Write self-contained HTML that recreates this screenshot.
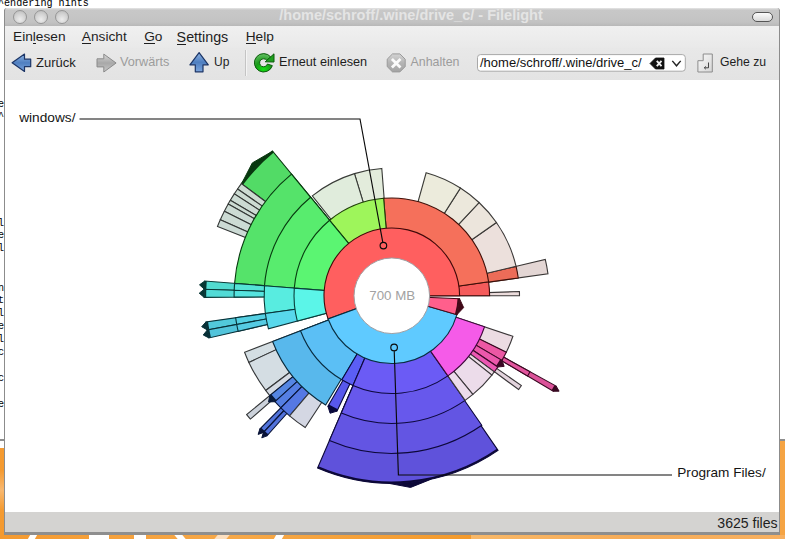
<!DOCTYPE html>
<html><head><meta charset="utf-8">
<style>
*{margin:0;padding:0;box-sizing:border-box}
html,body{width:785px;height:539px;overflow:hidden;background:#fff}
body{position:relative;font-family:"Liberation Sans",sans-serif;color:#1c1c1c}
.a{position:absolute;white-space:nowrap;line-height:1}
.mono{font-family:"Liberation Mono",monospace;font-size:10px;color:#000}
#desk{position:absolute;left:0;top:441px;width:785px;height:98px;background:linear-gradient(90deg,#f49a30 0%,#f6a848 30%,#f39a2c 60%,#f5a444 100%)}
#deskline{position:absolute;left:0;top:439px;width:785px;height:2px;background:#8e8e8e}
.box{position:absolute}
.wb{position:absolute;top:10px;width:14px;height:14px;border-radius:50%;background:radial-gradient(circle at 50% 70%,#ececec 0%,#d4d4d4 50%,#b8b8b8 100%);border:1px solid #969696}
.m{font-size:13.7px;color:#1e1e1e}
.m u{text-decoration:none;position:relative}
.m u:after{content:"";position:absolute;left:0;right:0;bottom:0px;height:1px;background:#1e1e1e}
.tb{font-size:12.7px;color:#1e1e1e}
.lbl{font-size:13.5px;color:#141414}
</style></head><body>
<div id="desk"></div>
<div class="box" style="left:0;top:441px;width:4px;height:7px;background:#fff"></div>
<div id="deskline"></div>
<div class="box" style="left:0;top:470px;width:4px;height:40px;background:linear-gradient(#f49a30,#f8b870 50%,#f49a30)"></div>
<div class="box" style="left:29px;top:535px;width:7px;height:4px;background:#fff;transform:skewX(-30deg)"></div>
<div class="box" style="left:89px;top:535px;width:20px;height:4px;background:#fff"></div>
<div class="box" style="left:134px;top:535px;width:12px;height:4px;background:#fff"></div>
<div class="box" style="left:176px;top:535px;width:8px;height:4px;background:#fff;transform:skewX(40deg)"></div>
<div class="box" style="left:216px;top:535px;width:12px;height:4px;background:#fde0c0;transform:skewX(-40deg)"></div>
<div class="box" style="left:275px;top:535px;width:8px;height:4px;background:#fff;transform:skewX(-30deg)"></div>
<div class="box" style="left:471px;top:535px;width:314px;height:4px;background:linear-gradient(90deg,#f8b868,#f6ac58 50%,#f7b060)"></div>
<div class="a mono" style="left:-2px;top:-1.5px;font-size:10.1px">^endering hints</div>
<div class="a mono" style="left:-2px;top:98.5px;line-height:12.9px;font-size:10.1px">e<br>^</div>
<div class="a mono" style="left:-2px;top:217.5px;line-height:12.9px;font-size:10.1px">l<br>e<br>l</div>
<div class="a mono" style="left:-2px;top:282.5px;line-height:12.9px;font-size:10.1px">n<br>t<br>l<br>e<br>l<br>c<br><br>c<br><br>e</div>

<!-- window frame -->
<div class="box" style="left:4px;top:10px;width:776px;height:525px;background:#8c8c8c"></div>
<div class="box" style="left:4px;top:8px;width:776px;height:18px;background:linear-gradient(#e6e6e6 0px,#c8c8c8 2px,#c3c3c3 14px,#b8b8b8 100%);border-radius:3px 3px 0 0;border-left:1px solid #8c8c8c;border-right:1px solid #8c8c8c"></div>
<div class="wb" style="left:13px"></div>
<div class="wb" style="left:34px"></div>
<div class="wb" style="left:55px"></div>
<div class="box" style="left:752px;top:12px;width:20.5px;height:10px;border-radius:5px;border:1px solid #555;background:linear-gradient(#fbfbfb,#dadada)"></div>
<div class="a" style="left:0;width:785px;text-align:center;top:8.4px;font-size:14.5px;font-weight:bold;color:#e4e4e4;padding-left:37px">/home/schroff/.wine/drive_c/ - Filelight</div>
<div class="box" style="left:5px;top:26px;width:774px;height:22px;background:linear-gradient(#f0f0f0,#e9e9e9)"></div>
<div class="box" style="left:5px;top:48px;width:774px;height:32px;background:linear-gradient(#e8e8e8,#e3e3e3)"></div>
<div class="box" style="left:5px;top:80px;width:774px;height:432px;background:#fff"></div>
<div class="box" style="left:5px;top:512px;width:774px;height:20px;background:#d4d3d1"></div>
<div class="box" style="left:5px;top:532px;width:774px;height:3px;background:#8e8e8e"></div>

<div class="a m" style="left:13px;top:30px">Ein<u>l</u>esen</div>
<div class="a m" style="left:81.8px;top:30px"><u>A</u>nsicht</div>
<div class="a m" style="left:144.2px;top:30px"><u>G</u>o</div>
<div class="a m" style="left:176.6px;top:29.5px;font-size:14.3px"><u>S</u>ettings</div>
<div class="a m" style="left:245.7px;top:30px"><u>H</u>elp</div>

<svg width="785" height="90" viewBox="0 0 785 90" style="position:absolute;left:0;top:0">
<defs>
<linearGradient id="gblue" x1="0" y1="0" x2="0" y2="1"><stop offset="0" stop-color="#8fb4e4"/><stop offset="0.5" stop-color="#4f7fc0"/><stop offset="1" stop-color="#7aa4dc"/></linearGradient>
<linearGradient id="ggray" x1="0" y1="0" x2="0" y2="1"><stop offset="0" stop-color="#d8d8d8"/><stop offset="0.5" stop-color="#a8a8a8"/><stop offset="1" stop-color="#c8c8c8"/></linearGradient>
<linearGradient id="gstop" x1="0" y1="0" x2="0" y2="1"><stop offset="0" stop-color="#d4d4d4"/><stop offset="0.5" stop-color="#b4b4b4"/><stop offset="1" stop-color="#a4a4a4"/></linearGradient>
<linearGradient id="gkey" x1="0" y1="0" x2="1" y2="1"><stop offset="0" stop-color="#fafafa"/><stop offset="1" stop-color="#d6d6d6"/></linearGradient>
</defs>
<path d="M12.1 62.8 L24.5 54.1 L24.5 59.2 L30.7 59.2 L30.7 66.7 L24.5 66.7 L24.5 71.5 Z" fill="url(#gblue)" stroke="#1c3566" stroke-width="1.2" stroke-linejoin="round"/>
<path d="M116.1 63 L103.8 54.1 L103.8 58.8 L97 58.8 L97 66.9 L103.8 66.9 L103.8 72 Z" fill="url(#ggray)" stroke="#8a8a8a" stroke-width="1" stroke-linejoin="round"/>
<path d="M199.1 52.6 L208.3 64.8 L203 64.8 L203 71.8 L195.3 71.8 L195.3 64.8 L189.9 64.8 Z" fill="url(#gblue)" stroke="#1c3566" stroke-width="1.2" stroke-linejoin="round"/>
<line x1="245.5" y1="50" x2="245.5" y2="76" stroke="#c4c4c4" stroke-width="1"/>
<line x1="246.5" y1="50" x2="246.5" y2="76" stroke="#f4f4f4" stroke-width="1"/>
<!-- reload -->
<defs><radialGradient id="ggreen" cx="0.5" cy="0.85" r="0.8"><stop offset="0" stop-color="#12e012"/><stop offset="0.55" stop-color="#1a9a1a"/><stop offset="1" stop-color="#5cbc5c"/></radialGradient></defs>
<path d="M270.85 57.14 A9.2 9.2 0 1 0 272.35 65.64 L267.40 64.04 A4 4 0 1 1 266.75 60.34 Z" fill="url(#ggreen)" stroke="#0c5c0c" stroke-width="1"/>
<path d="M265.2 61.8 L274 53.8 L274 62 Z" fill="#1ea01e" stroke="#0c5c0c" stroke-width="1" stroke-linejoin="round"/>
<!-- stop -->
<path d="M392.5 53.9 L399.9 53.9 L405.2 59.2 L405.2 66.6 L399.9 71.9 L392.5 71.9 L387.2 66.6 L387.2 59.2 Z" fill="url(#gstop)" stroke="#9a9a9a" stroke-width="1"/>
<path d="M391.9 59 L400.5 67.4 M400.5 59 L391.9 67.4" stroke="#fafafa" stroke-width="2.8"/>
<!-- combo -->
<rect x="477.5" y="54.6" width="207.8" height="16.6" rx="3" ry="3" fill="#fff" stroke="#a8a8a8" stroke-width="1"/>
<path d="M650 63.5 L655.5 58 L664 58 L664 69 L655.5 69 Z" fill="#111" stroke="#111" stroke-width="0.8" stroke-linejoin="round"/>
<path d="M656.8 60.8 L661.5 66.2 M661.5 60.8 L656.8 66.2" stroke="#f0f0f0" stroke-width="1.9"/>
<path d="M672.3 60.9 L676.5 65.8 L680.7 60.9" fill="none" stroke="#222" stroke-width="1.4"/>
<!-- gehe zu -->
<path d="M703.2 54 L712.3 54 L712.3 72 L697.9 72 L697.9 60.7 L703.2 60.7 Z" fill="url(#gkey)" stroke="#8c8c8c" stroke-width="1" stroke-linejoin="round"/>
<path d="M708.5 62.5 L708.5 67.8 L704.5 67.8 M705.8 66.4 L704.3 67.8 L705.8 69.2" fill="none" stroke="#333" stroke-width="0.9"/>
</svg>
<div class="a tb" style="left:36px;top:56px;font-size:13px">Zurück</div>
<div class="a tb" style="left:120px;top:56px;color:#9c9c9c">Vorwärts</div>
<div class="a tb" style="left:214px;top:56.4px;font-size:12px">Up</div>
<div class="a tb" style="left:279px;top:56px">Erneut einlesen</div>
<div class="a tb" style="left:410.5px;top:56px;color:#9c9c9c;font-size:12.4px">Anhalten</div>
<div class="a tb" style="left:480px;top:56.3px;font-size:13px;color:#111">/home/schroff/.wine/drive_c/</div>
<div class="a tb" style="left:720px;top:56px;font-size:12.2px">Gehe zu</div>


<div class="a tb" style="left:717.3px;top:516.2px;font-size:14.1px">3625 files</div>

<svg width="785" height="539" viewBox="0 0 785 539" style="position:absolute;left:0;top:0">
<path d="M271.57 151.74 L252.32 162.93 L242.09 182.70 Z" fill="#08370f" stroke="#08370f"/>
<path d="M391.80 295.75 L272.47 150.99 A187.60 187.60 0 0 0 241.39 183.64 Z" fill="#52db66" stroke="#08370f" stroke-width="1.1"/>
<path d="M273.11 151.76 A186.60 186.60 0 0 0 242.19 184.23" fill="none" stroke="#08370f" stroke-width="2"/>
<path d="M391.80 295.75 L241.39 183.64 A187.60 187.60 0 0 0 237.57 188.95 Z" fill="#ccdbd2" stroke="#333735" stroke-width="1.1"/>
<path d="M391.80 295.75 L237.57 188.95 A187.60 187.60 0 0 0 234.29 193.85 Z" fill="#ccdbd2" stroke="#333735" stroke-width="1.1"/>
<path d="M391.80 295.75 L234.29 193.85 A187.60 187.60 0 0 0 230.32 200.25 Z" fill="#ccdbd3" stroke="#333735" stroke-width="1.1"/>
<path d="M391.80 295.75 L230.32 200.25 A187.60 187.60 0 0 0 228.20 203.94 Z" fill="#ccdbd3" stroke="#333735" stroke-width="1.1"/>
<path d="M391.80 295.75 L228.20 203.94 A187.60 187.60 0 0 0 224.35 211.17 Z" fill="#ccdbd4" stroke="#333735" stroke-width="1.1"/>
<path d="M391.80 295.75 L224.35 211.17 A187.60 187.60 0 0 0 220.29 219.75 Z" fill="#ccdbd4" stroke="#333735" stroke-width="1.1"/>
<path d="M391.80 295.75 L220.29 219.75 A187.60 187.60 0 0 0 217.49 226.39 Z" fill="#ccdbd5" stroke="#333736" stroke-width="1.1"/>
<path d="M204.78 281.03 L199.51 284.83 L204.31 289.20 Z" fill="#083733" stroke="#083733"/>
<path d="M391.80 295.75 L204.78 281.03 A187.60 187.60 0 0 0 204.31 289.20 Z" fill="#52dbd0" stroke="#083733" stroke-width="1.1"/>
<path d="M205.78 281.11 A186.60 186.60 0 0 0 205.31 289.24" fill="none" stroke="#083733" stroke-width="2"/>
<path d="M204.31 289.20 L199.22 293.23 L204.21 297.39 Z" fill="#083735" stroke="#083735"/>
<path d="M391.80 295.75 L204.31 289.20 A187.60 187.60 0 0 0 204.21 297.39 Z" fill="#52dbd6" stroke="#083735" stroke-width="1.1"/>
<path d="M205.31 289.24 A186.60 186.60 0 0 0 205.21 297.38" fill="none" stroke="#083735" stroke-width="2"/>
<path d="M206.03 321.86 L201.70 326.71 L207.34 329.94 Z" fill="#083137" stroke="#083137"/>
<path d="M391.80 295.75 L206.03 321.86 A187.60 187.60 0 0 0 207.34 329.94 Z" fill="#52c9db" stroke="#083137" stroke-width="1.1"/>
<path d="M207.02 321.72 A186.60 186.60 0 0 0 208.32 329.76" fill="none" stroke="#083137" stroke-width="2"/>
<path d="M207.34 329.94 L203.24 334.97 L209.01 337.95 Z" fill="#082f37" stroke="#082f37"/>
<path d="M391.80 295.75 L207.34 329.94 A187.60 187.60 0 0 0 209.01 337.95 Z" fill="#52c4db" stroke="#082f37" stroke-width="1.1"/>
<path d="M208.32 329.76 A186.60 186.60 0 0 0 209.98 337.73" fill="none" stroke="#082f37" stroke-width="2"/>
<path d="M391.80 295.75 L246.63 414.57 A187.60 187.60 0 0 0 250.43 419.07 Z" fill="#ccd2db" stroke="#333537" stroke-width="1.1"/>
<path d="M259.84 429.10 L258.13 434.41 L263.38 432.50 Z" fill="#081337" stroke="#081337"/>
<path d="M391.80 295.75 L259.84 429.10 A187.60 187.60 0 0 0 263.38 432.50 Z" fill="#5274db" stroke="#081337" stroke-width="1.1"/>
<path d="M260.55 428.39 A186.60 186.60 0 0 0 264.06 431.78" fill="none" stroke="#081337" stroke-width="2"/>
<path d="M263.38 432.50 L261.81 437.86 L267.00 435.82 Z" fill="#081337" stroke="#081337"/>
<path d="M391.80 295.75 L263.38 432.50 A187.60 187.60 0 0 0 267.00 435.82 Z" fill="#5272db" stroke="#081337" stroke-width="1.1"/>
<path d="M264.06 431.78 A186.60 186.60 0 0 0 267.67 435.07" fill="none" stroke="#081337" stroke-width="2"/>
<path d="M388.72 483.32 L410.59 487.43 L431.26 479.15 Z" fill="#0c0837" stroke="#0c0837"/>
<path d="M391.80 295.75 L317.60 468.05 A187.60 187.60 0 0 0 498.06 450.36 Z" fill="#5f52db" stroke="#0c0837" stroke-width="1.1"/>
<path d="M317.99 467.13 A186.60 186.60 0 0 0 497.49 449.53" fill="none" stroke="#0c0837" stroke-width="2"/>
<path d="M553.28 391.25 L559.10 391.18 L556.20 386.13 Z" fill="#370820" stroke="#370820"/>
<path d="M391.80 295.75 L553.28 391.25 A187.60 187.60 0 0 0 556.20 386.13 Z" fill="#db5299" stroke="#370820" stroke-width="1.1"/>
<path d="M552.41 390.74 A186.60 186.60 0 0 0 555.32 385.65" fill="none" stroke="#370820" stroke-width="2"/>
<path d="M391.80 295.75 L547.97 273.80 A157.70 157.70 0 0 0 545.27 259.47 Z" fill="#e3d6d4" stroke="#393635" stroke-width="1.1"/>
<path d="M391.80 295.75 L291.49 174.06 A157.70 157.70 0 0 0 234.59 283.38 Z" fill="#55e36a" stroke="#08390f" stroke-width="1.1"/>
<path d="M391.80 295.75 L234.59 283.38 A157.70 157.70 0 0 0 234.20 290.25 Z" fill="#55e3d7" stroke="#083935" stroke-width="1.1"/>
<path d="M391.80 295.75 L234.20 290.25 A157.70 157.70 0 0 0 234.11 297.13 Z" fill="#55e3de" stroke="#083937" stroke-width="1.1"/>
<path d="M391.80 295.75 L235.63 317.70 A157.70 157.70 0 0 0 236.74 324.49 Z" fill="#55d0e3" stroke="#083239" stroke-width="1.1"/>
<path d="M391.80 295.75 L236.74 324.49 A157.70 157.70 0 0 0 238.14 331.22 Z" fill="#55cbe3" stroke="#083139" stroke-width="1.1"/>
<path d="M391.80 295.75 L244.57 352.26 A157.70 157.70 0 0 0 248.88 362.40 Z" fill="#d4dee3" stroke="#353839" stroke-width="1.1"/>
<path d="M391.80 295.75 L248.88 362.40 A157.70 157.70 0 0 0 265.69 390.44 Z" fill="#d4dde3" stroke="#353739" stroke-width="1.1"/>
<path d="M391.80 295.75 L265.69 390.44 A157.70 157.70 0 0 0 269.77 395.63 Z" fill="#d4dae3" stroke="#353739" stroke-width="1.1"/>
<path d="M269.77 395.63 L268.54 401.95 L274.98 401.68 Z" fill="#081939" stroke="#081939"/>
<path d="M391.80 295.75 L269.77 395.63 A157.70 157.70 0 0 0 274.98 401.68 Z" fill="#5586e3" stroke="#081939" stroke-width="1.1"/>
<path d="M270.54 395.00 A156.70 156.70 0 0 0 275.72 401.01" fill="none" stroke="#081939" stroke-width="2"/>
<path d="M391.80 295.75 L274.98 401.68 A157.70 157.70 0 0 0 280.87 407.84 Z" fill="#557fe3" stroke="#081739" stroke-width="1.1"/>
<path d="M391.80 295.75 L280.87 407.84 A157.70 157.70 0 0 0 289.59 415.84 Z" fill="#5578e3" stroke="#081439" stroke-width="1.1"/>
<path d="M391.80 295.75 L289.59 415.84 A157.70 157.70 0 0 0 305.22 427.56 Z" fill="#d4d7e3" stroke="#353639" stroke-width="1.1"/>
<path d="M391.80 295.75 L329.42 440.59 A157.70 157.70 0 0 0 481.80 425.25 Z" fill="#6355e3" stroke="#0d0839" stroke-width="1.1"/>
<path d="M391.80 295.75 L527.54 376.03 A157.70 157.70 0 0 0 529.99 371.72 Z" fill="#e3559e" stroke="#390821" stroke-width="1.1"/>
<path d="M391.80 295.75 L518.57 389.55 A157.70 157.70 0 0 0 521.45 385.53 Z" fill="#e3d4dd" stroke="#393538" stroke-width="1.1"/>
<path d="M391.80 295.75 L519.50 295.75 A127.70 127.70 0 0 0 519.43 291.52 Z" fill="#ecdcdc" stroke="#3b3737" stroke-width="1.1"/>
<path d="M391.80 295.75 L518.26 277.98 A127.70 127.70 0 0 0 516.07 266.37 Z" fill="#ec6c58" stroke="#3b0f08" stroke-width="1.1"/>
<path d="M391.80 295.75 L516.07 266.37 A127.70 127.70 0 0 0 496.41 222.50 Z" fill="#ece0dc" stroke="#3b3837" stroke-width="1.1"/>
<path d="M391.80 295.75 L496.41 222.50 A127.70 127.70 0 0 0 479.05 202.51 Z" fill="#ece5dc" stroke="#3b3937" stroke-width="1.1"/>
<path d="M391.80 295.75 L479.05 202.51 A127.70 127.70 0 0 0 460.41 188.05 Z" fill="#ece8dc" stroke="#3b3a37" stroke-width="1.1"/>
<path d="M391.80 295.75 L460.41 188.05 A127.70 127.70 0 0 0 426.14 172.75 Z" fill="#ecebdc" stroke="#3b3b37" stroke-width="1.1"/>
<path d="M391.80 295.75 L381.78 168.44 A127.70 127.70 0 0 0 354.46 173.63 Z" fill="#e3ecdc" stroke="#393b37" stroke-width="1.1"/>
<path d="M391.80 295.75 L354.46 173.63 A127.70 127.70 0 0 0 312.30 195.81 Z" fill="#e0ecdc" stroke="#383b37" stroke-width="1.1"/>
<path d="M391.80 295.75 L310.57 197.21 A127.70 127.70 0 0 0 264.49 285.73 Z" fill="#58ec6e" stroke="#083b10" stroke-width="1.1"/>
<path d="M391.80 295.75 L264.49 285.73 A127.70 127.70 0 0 0 265.34 313.52 Z" fill="#58ece0" stroke="#083b37" stroke-width="1.1"/>
<path d="M391.80 295.75 L265.34 313.52 A127.70 127.70 0 0 0 268.45 328.80 Z" fill="#58d8ec" stroke="#08343b" stroke-width="1.1"/>
<path d="M391.80 295.75 L272.58 341.51 A127.70 127.70 0 0 0 325.65 404.98 Z" fill="#58b8ec" stroke="#08293b" stroke-width="1.1"/>
<path d="M327.95 406.34 L330.12 413.24 L337.02 411.11 Z" fill="#08083b" stroke="#08083b"/>
<path d="M391.80 295.75 L327.95 406.34 A127.70 127.70 0 0 0 337.02 411.11 Z" fill="#5858ec" stroke="#08083b" stroke-width="1.1"/>
<path d="M328.45 405.48 A126.70 126.70 0 0 0 337.45 410.20" fill="none" stroke="#08083b" stroke-width="2"/>
<path d="M391.80 295.75 L341.29 413.04 A127.70 127.70 0 0 0 465.05 400.36 Z" fill="#6758ec" stroke="#0d083b" stroke-width="1.1"/>
<path d="M391.80 295.75 L506.28 352.33 A127.70 127.70 0 0 0 512.90 336.27 Z" fill="#ecdce3" stroke="#3b3739" stroke-width="1.1"/>
<path d="M391.80 295.75 L501.94 360.37 A127.70 127.70 0 0 0 506.28 352.33 Z" fill="#ec58a4" stroke="#3b0822" stroke-width="1.1"/>
<path d="M497.79 366.97 L504.15 366.36 L501.94 360.37 Z" fill="#3b0825" stroke="#3b0825"/>
<path d="M391.80 295.75 L497.79 366.97 A127.70 127.70 0 0 0 501.94 360.37 Z" fill="#ec58ac" stroke="#3b0825" stroke-width="1.1"/>
<path d="M496.96 366.42 A126.70 126.70 0 0 0 501.08 359.86" fill="none" stroke="#3b0825" stroke-width="2"/>
<path d="M391.80 295.75 L494.32 371.89 A127.70 127.70 0 0 0 497.79 366.97 Z" fill="#ec58b3" stroke="#3b0827" stroke-width="1.1"/>
<path d="M391.80 295.75 L491.88 375.07 A127.70 127.70 0 0 0 494.32 371.89 Z" fill="#ecdce6" stroke="#3b373a" stroke-width="1.1"/>
<path d="M391.80 295.75 L472.86 394.43 A127.70 127.70 0 0 0 491.88 375.07 Z" fill="#ecdcea" stroke="#3b373a" stroke-width="1.1"/>
<path d="M391.80 295.75 L465.05 400.36 A127.70 127.70 0 0 0 472.86 394.43 Z" fill="#ecdceb" stroke="#3b373b" stroke-width="1.1"/>
<path d="M391.80 295.75 L489.60 295.75 A97.80 97.80 0 0 0 488.60 281.80 Z" fill="#f55b5b" stroke="#3e0909" stroke-width="1.1"/>
<path d="M391.80 295.75 L488.60 281.80 A97.80 97.80 0 0 0 383.62 198.29 Z" fill="#f5705b" stroke="#3e1009" stroke-width="1.1"/>
<path d="M391.80 295.75 L383.62 198.29 A97.80 97.80 0 0 0 329.59 220.29 Z" fill="#9ef55b" stroke="#203e09" stroke-width="1.1"/>
<path d="M391.80 295.75 L329.59 220.29 A97.80 97.80 0 0 0 294.30 288.08 Z" fill="#5bf572" stroke="#093e11" stroke-width="1.1"/>
<path d="M391.80 295.75 L294.30 288.08 A97.80 97.80 0 0 0 297.33 321.06 Z" fill="#5bf5e8" stroke="#093e3a" stroke-width="1.1"/>
<path d="M391.80 295.75 L300.50 330.80 A97.80 97.80 0 0 0 341.87 379.84 Z" fill="#5bbff5" stroke="#092b3e" stroke-width="1.1"/>
<path d="M391.80 295.75 L341.87 379.84 A97.80 97.80 0 0 0 352.96 385.51 Z" fill="#5b5ef5" stroke="#09093e" stroke-width="1.1"/>
<path d="M391.80 295.75 L352.96 385.51 A97.80 97.80 0 0 0 447.90 375.86 Z" fill="#6b5bf5" stroke="#0e093e" stroke-width="1.1"/>
<path d="M391.80 295.75 L447.90 375.86 A97.80 97.80 0 0 0 484.55 326.78 Z" fill="#f55be8" stroke="#3e093a" stroke-width="1.1"/>
<path d="M391.80 295.75 L459.60 295.75 A67.80 67.80 0 1 0 328.09 318.94 Z" fill="#ff5f5f" stroke="#400909" stroke-width="1.1"/>
<path d="M391.80 295.75 L328.09 318.94 A67.80 67.80 0 0 0 456.91 314.67 Z" fill="#5fcaff" stroke="#092e40" stroke-width="1.1"/>
<path d="M456.91 314.67 L463.63 307.58 L459.54 298.71 Z" fill="#400918" stroke="#400918"/>
<path d="M391.80 295.75 L456.91 314.67 A67.80 67.80 0 0 0 459.54 298.71 Z" fill="#ff5f8c" stroke="#400918" stroke-width="1.1"/>
<path d="M455.95 314.39 A66.80 66.80 0 0 0 458.54 298.66" fill="none" stroke="#400918" stroke-width="2"/>
<circle cx="391.80" cy="295.75" r="37.80" fill="#fff" stroke="#a0a0a4"/>
<g fill="none" stroke="#0a0a0a" stroke-width="1.15">
<path d="M79.5 119 L360 119 L382.80 242.35" />
<circle cx="383.40" cy="245.60" r="3.3"/>
<path d="M394.21 350.70 L398.4 475 L672 475" />
<circle cx="394.10" cy="347.40" r="3.3"/>
</g>
</svg>
<div class="a lbl" style="left:19.2px;top:110.7px;font-size:13.7px">windows/</div>
<div class="a lbl" style="left:677.3px;top:466.4px;font-size:13.6px">Program Files/</div>
<div class="a" style="left:369.3px;top:288.5px;font-size:13.3px;color:#a2a2a2">700 MB</div>
</body></html>
